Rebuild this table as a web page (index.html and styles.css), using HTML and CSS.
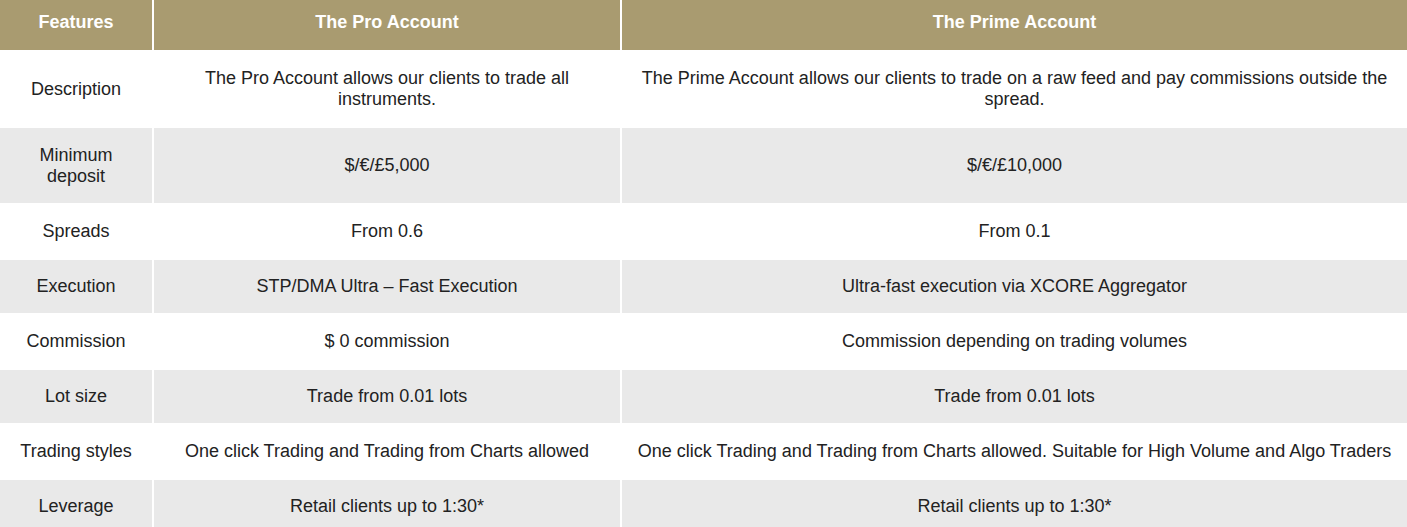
FILE: index.html
```html
<!DOCTYPE html>
<html lang="en">
<head>
<meta charset="utf-8">
<title>Account comparison</title>
<link rel="stylesheet" href="styles.css">
</head>
<body>
<div class="table">
  <div class="cell head">Features</div>
  <div class="cell head">The Pro Account</div>
  <div class="cell head">The Prime Account</div>

  <div class="cell">Description</div>
  <div class="cell">The Pro Account allows our clients to trade all instruments.</div>
  <div class="cell">The Prime Account allows our clients to trade on a raw feed and pay commissions outside the spread.</div>

  <div class="cell alt">Minimum deposit</div>
  <div class="cell alt">$/€/£5,000</div>
  <div class="cell alt">$/€/£10,000</div>

  <div class="cell">Spreads</div>
  <div class="cell">From 0.6</div>
  <div class="cell">From 0.1</div>

  <div class="cell alt">Execution</div>
  <div class="cell alt">STP/DMA Ultra – Fast Execution</div>
  <div class="cell alt">Ultra-fast execution via XCORE Aggregator</div>

  <div class="cell">Commission</div>
  <div class="cell">$ 0 commission</div>
  <div class="cell">Commission depending on trading volumes</div>

  <div class="cell alt">Lot size</div>
  <div class="cell alt">Trade from 0.01 lots</div>
  <div class="cell alt">Trade from 0.01 lots</div>

  <div class="cell">Trading styles</div>
  <div class="cell">One click Trading and Trading from Charts allowed</div>
  <div class="cell">One click Trading and Trading from Charts allowed. Suitable for High Volume and Algo Traders</div>

  <div class="cell alt">Leverage</div>
  <div class="cell alt">Retail clients up to 1:30*</div>
  <div class="cell alt">Retail clients up to 1:30*</div>
</div>
</body>
</html>
```
FILE: styles.css
```css
html, body {
  margin: 0;
  padding: 0;
  background: #ffffff;
}
body {
  font-family: "Liberation Sans", Arial, sans-serif;
  font-size: 18px;
  line-height: 21px;
  color: #222222;
}
.table {
  display: grid;
  grid-template-columns: 152px 466px 785px;
  grid-template-rows: 50px 74px 75px repeat(6, 53px);
  column-gap: 2px;
  row-gap: 2px;
  width: 1407px;
}
.cell {
  padding: 0 15px;
  text-align: center;
  display: flex;
  align-items: center;
  justify-content: center;
  background: #ffffff;
}
.cell.alt {
  background: #e9e9e9;
}
.cell.head {
  background: #a99b70;
  color: #ffffff;
  font-weight: bold;
  padding: 0 15px 5px;
}
```
